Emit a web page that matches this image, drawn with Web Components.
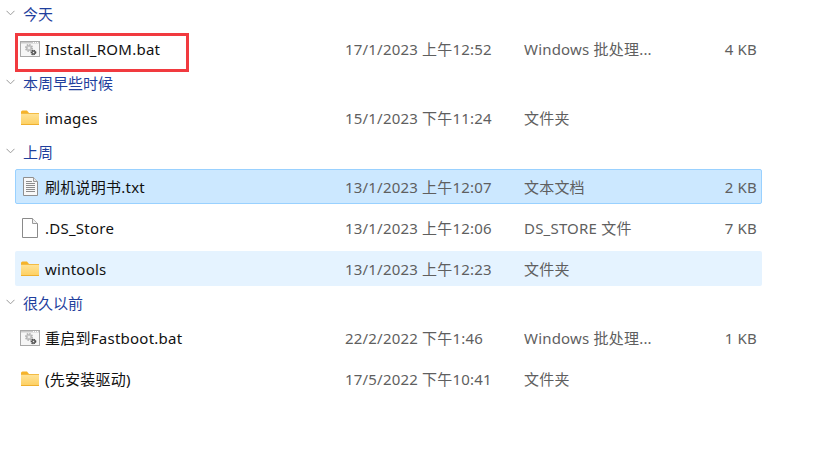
<!DOCTYPE html>
<html lang="zh"><head><meta charset="utf-8"><title>Files</title>
<style>
html,body{margin:0;padding:0;background:#fff;}
body{width:832px;height:459px;overflow:hidden;font-family:"Noto Sans","Noto Sans CJK SC",sans-serif;font-size:15px;position:relative;}
file-list{width:747px;margin-left:15px;}
</style></head><body>
<template id="t-group"><style>
:host{display:block;margin-left:-15px;}
.h{height:28px;display:flex;align-items:center;padding:0 0 2px 6px;box-sizing:border-box;gap:8px;color:#1f3f9d;font-size:15px;}
svg{display:block;flex:none;width:9px;height:6px;}
.rows{display:flex;flex-direction:column;gap:6px;margin:3px 0 3px 15px;}
</style><div class="h"><svg viewBox="0 0 9 6"><path d="M.5.8 4.5 4.8 8.5.8" fill="none" stroke="#9a9a9a" stroke-width="1"/></svg><span id="l"></span></div><div class="rows"><slot></slot></div></template>
<template id="t-row"><style>
:host{display:grid;grid-template-columns:20px 300px 179px 1fr 80px;column-gap:0;align-items:center;height:35px;box-sizing:border-box;padding:0 4px 0 4px;border:1px solid transparent;border-radius:2px;color:#5f5f5f;font-size:15px;letter-spacing:.2px;}
:host([state=sel]){background:#cce8ff;border-color:#99d1ff;}
:host([state=hover]){background:#e5f3ff;}
.i{display:flex;align-items:center;justify-content:center;}
.n{color:#111;font-size:15px;letter-spacing:.25px;white-space:nowrap;padding-left:5px;}
.d,.t{margin-left:5px;margin-right:-5px;white-space:nowrap;}
.s{text-align:right;}
</style><div class="i"><slot name="icon"></slot></div><div class="n" id="n"></div><div class="d" id="d"></div><div class="t" id="t"></div><div class="s" id="s"></div></template>
<template id="t-icon"><style>:host{display:block;line-height:0;}svg{display:block;}</style><span id="h"></span></template>

<file-list>
<file-group label="今天">
 <file-row name="Install_ROM.bat" date="17/1/2023 上午12:52" type="Windows 批处理..." size="4 KB"><file-icon slot="icon" kind="bat"></file-icon></file-row>
</file-group>
<file-group label="本周早些时候">
 <file-row name="images" date="15/1/2023 下午11:24" type="文件夹"><file-icon slot="icon" kind="folder"></file-icon></file-row>
</file-group>
<file-group label="上周">
 <file-row state="sel" name="刷机说明书.txt" date="13/1/2023 上午12:07" type="文本文档" size="2 KB"><file-icon slot="icon" kind="txt"></file-icon></file-row>
 <file-row name=".DS_Store" date="13/1/2023 上午12:06" type="DS_STORE 文件" size="7 KB"><file-icon slot="icon" kind="blank"></file-icon></file-row>
 <file-row state="hover" name="wintools" date="13/1/2023 上午12:23" type="文件夹"><file-icon slot="icon" kind="folder"></file-icon></file-row>
</file-group>
<file-group label="很久以前">
 <file-row name="重启到Fastboot.bat" date="22/2/2022 下午1:46" type="Windows 批处理..." size="1 KB"><file-icon slot="icon" kind="bat"></file-icon></file-row>
 <file-row name="(先安装驱动)" date="17/5/2022 下午10:41" type="文件夹"><file-icon slot="icon" kind="folder"></file-icon></file-row>
</file-group>
</file-list>
<red-box></red-box>
<script>
const tpl=id=>document.getElementById(id).content.cloneNode(true);
const ICONS={
bat:`<svg width="20" height="16" viewBox="0 0 20 16"><rect x=".5" y=".5" width="19" height="15" fill="#f6f6f6" stroke="#a8a8a8"/><rect x="1" y="1" width="18" height="1.500" fill="#c9c9c9"/><path d="M13 1.500h5" stroke="#fff" stroke-dasharray="1 1"/><circle cx="9" cy="7" r="3.100" fill="#c6c6c6" stroke="#b2b2b2" stroke-width="1.800" stroke-dasharray="1.500 .9"/><circle cx="9" cy="7" r="1.100" fill="#f4f4f4"/><circle cx="13.500" cy="11.500" r="2.200" fill="#6a6a6a" stroke="#4c4c4c" stroke-width="1.300" stroke-dasharray="1.200 .7"/><circle cx="13.500" cy="11.500" r=".7" fill="#eee"/></svg>`,
folder:`<svg width="18" height="15" viewBox="0 0 18 15"><defs><linearGradient id="g" x1="0" y1="0" x2="0" y2="1"><stop offset="0" stop-color="#ffe49a"/><stop offset="1" stop-color="#fdcf60"/></linearGradient></defs><path d="M0 2Q0 .5 1.500 .5H6L8 3H0Z" fill="#f5b32a"/><rect x="0" y="3" width="18" height="12" rx=".6" fill="url(#g)"/><path d="M0 3.500H18" stroke="#f3bb44"/><path d="M0 14.500H18" stroke="#efb02f"/></svg>`,
txt:`<svg width="15" height="19" viewBox="0 0 15 19"><path d="M.5.500H10.500L14.500 4.500V18.500H.5Z" fill="#f8f8f8" stroke="#8f8f8f"/><path d="M10.500.500V4.500H14.500" fill="#e8e8e8" stroke="#9a9a9a"/><path d="M3 4.500H9M3 6.500H12M3 8.500H12M3 10.500H12M3 12.500H12M3 14.500H12" stroke="#8d8d8d"/></svg>`,
blank:`<svg width="16" height="20" viewBox="0 0 16 20"><path d="M.5.500H10.500L15.500 5.500V19.500H.5Z" fill="#fff" stroke="#8a8a8a"/><path d="M10.500.500V5.500H15.500" fill="#f0f0f0" stroke="#9a9a9a"/></svg>`};
customElements.define('file-list',class extends HTMLElement{constructor(){super();this.attachShadow({mode:'open'}).innerHTML='<style>:host{display:block}</style><slot></slot>';}});
customElements.define('file-group',class extends HTMLElement{constructor(){super();this.attachShadow({mode:'open'}).append(tpl('t-group'));}
 connectedCallback(){this.shadowRoot.getElementById('l').textContent=this.getAttribute('label');}});
customElements.define('file-row',class extends HTMLElement{constructor(){super();this.attachShadow({mode:'open'}).append(tpl('t-row'));}
 connectedCallback(){const r=this.shadowRoot;[['n','name'],['d','date'],['t','type'],['s','size']].forEach(([i,a])=>r.getElementById(i).textContent=this.getAttribute(a)||'');}});
customElements.define('file-icon',class extends HTMLElement{constructor(){super();this.attachShadow({mode:'open'}).append(tpl('t-icon'));}
 connectedCallback(){this.shadowRoot.getElementById('h').innerHTML=ICONS[this.getAttribute('kind')];}});
customElements.define('red-box',class extends HTMLElement{constructor(){super();this.attachShadow({mode:'open'}).innerHTML='<style>:host{display:block;position:absolute;left:15px;top:33px;width:174px;height:39px;box-sizing:border-box;border:3px solid #f13a3f;pointer-events:none}</style>';}});
</script>
</body></html>
